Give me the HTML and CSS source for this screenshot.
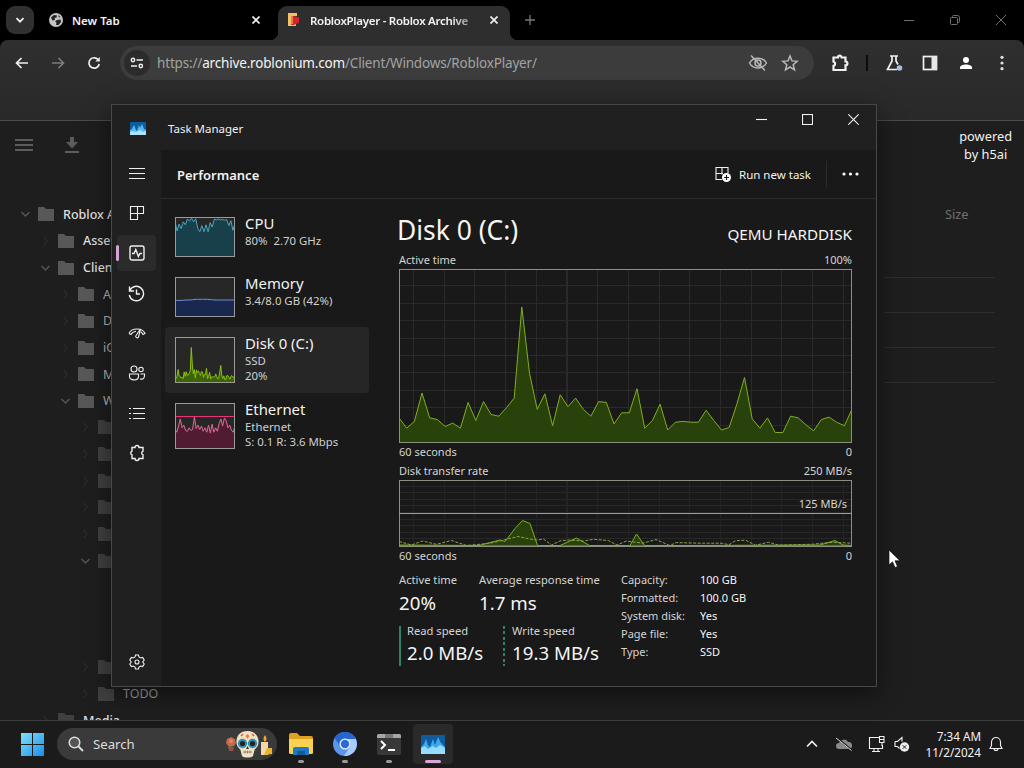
FILE: index.html
```html
<!DOCTYPE html>
<html lang="en">
<head>
    <meta charset="UTF-8">
    <meta name="viewport" content="width=device-width, initial-scale=1.0">
    <title>Task Manager</title>
    <link rel="stylesheet" href="styles.css">
</head>
<body>
    <div class="browser">
        <div class="tab-strip">
            <div class="tab-search">
                <svg width="10" height="10" viewBox="0 0 10 10"><path d="M1.5 3.2 5 6.7l3.500-3.500" class="line thick"/></svg>
            </div>
            <div class="tab">
                <svg class="favicon" width="14" height="14" viewBox="0 0 14 14">
                    <circle cx="7" cy="7" r="7" fill="#c4c4c4"/>
                    <path d="M2 4.500 5 2l3 .500-.500 2-2 .500.500 2-2.500.500zM8 7l3.500-.500L12 9l-2.500 3H7l.500-2.500L6 8.500zM9 2l2.500 2-1.500.500z" fill="#222"/>
                </svg>
                <span class="tab-title">New Tab</span>
                <svg class="tab-close" width="8" height="8" viewBox="0 0 8 8"><path d="M.500.500l7 7M7.500.500l-7 7" class="line thick"/></svg>
            </div>
            <div class="tab active">
                <svg class="favicon" width="14" height="14" viewBox="0 0 14 14">
                    <path d="M1 0h9v3H5v7h4v3H1z" fill="#f3c069"/>
                    <path d="M4 3h3l5 1.500v5L7 12H4z" fill="#d3252b"/>
                    <path d="M4 3h2v8H4z" fill="#f07a3c"/>
                </svg>
                <span class="tab-title fade">RobloxPlayer - Roblox Archive</span>
                <svg class="tab-close" width="8" height="8" viewBox="0 0 8 8"><path d="M.500.500l7 7M7.500.500l-7 7" class="line thick"/></svg>
            </div>
            <svg class="new-tab" width="10" height="10" viewBox="0 0 10 10"><path d="M5 0v10M0 5h10" stroke="#777" stroke-width="1.300"/></svg>
            <div class="caption-buttons">
                <span><svg width="10" height="10" viewBox="0 0 10 10"><path d="M0 5.500h10" class="dim-line"/></svg></span>
                <span><svg width="10" height="10" viewBox="0 0 10 10"><rect x=".500" y="2.500" width="7" height="7" rx="1" class="dim-line"/><path d="M2.500 2.500V1.500a1 1 0 0 1 1-1h4a2 2 0 0 1 2 2v4a1 1 0 0 1-1 1h-1" class="dim-line"/></svg></span>
                <span><svg width="10" height="10" viewBox="0 0 10 10"><path d="M0 0l10 10M10 0L0 10" class="dim-line"/></svg></span>
            </div>
        </div>

        <div class="toolbar">
            <div class="toolbar-row">
                <div class="nav">
                    <span><svg width="14" height="12" viewBox="0 0 14 12"><path d="M13 6H2M6.500 1l-5 5 5 5" class="line thick"/></svg></span>
                    <span class="disabled"><svg width="14" height="12" viewBox="0 0 14 12"><path d="M1 6h11M7.500 1l5 5-5 5" class="line thick"/></svg></span>
                    <span><svg width="14" height="14" viewBox="0 0 14 14"><path d="M11.500 4.200A5.200 5.200 0 1 0 12.200 8" class="line thick"/><path d="M12.800 1v4.500H8.300z" fill="#e8e8e8"/></svg></span>
                </div>
                <div class="omnibox">
                    <div class="site-info">
                        <svg width="14" height="12" viewBox="0 0 14 12"><circle cx="3" cy="3" r="1.700" class="line bold"/><path d="M6.500 3H13M1 9h6" class="line thick"/><circle cx="10.800" cy="9" r="1.700" class="line bold"/></svg>
                    </div>
                    <div class="url">https://<b>archive.roblonium.com</b>/Client/Windows/RobloxPlayer/</div>
                    <svg width="20" height="18" viewBox="0 0 20 18" class="soft"><path d="M1.500 9C5 2.500 15 2.500 18.500 9 15 15.500 5 15.500 1.500 9z"/><circle cx="10" cy="9" r="3"/><path d="M3 1.500l14 15"/></svg>
                    <svg width="18" height="18" viewBox="0 0 18 18" class="soft star"><path d="M9 2l2 4.900 5.200.4-4 3.400 1.300 5.100L9 13l-4.500 2.800 1.300-5.100-4-3.400 5.200-.4z"/></svg>
                </div>
                <div class="extensions">
                    <span class="puzzle"><svg width="18" height="18" viewBox="0 0 18 18"><path d="M2.500 3.500H7a1.800 1.800 0 0 1 3.600 0h3.900v4a1.900 1.900 0 0 1 0 3.800V16h-12v-4.200a2.100 2.100 0 0 0 0-4.100z" class="line heavy"/></svg></span>
                    <i class="separator"></i>
                    <span><svg width="18" height="18" viewBox="0 0 18 18"><path d="M5 2h8M7 2v5L2.500 15.500H12M11 2v5l2 3.500" class="line thick"/><circle cx="14.500" cy="14" r="2.800" fill="#a8c0e0"/></svg></span>
                    <span><svg width="16" height="16" viewBox="0 0 16 16"><rect x="1.500" y="1.500" width="13" height="13" class="line thick"/><path d="M9.500 1H15v14H9.500z" fill="#e8e8e8"/></svg></span>
                    <span class="avatar"><svg width="14" height="14" viewBox="0 0 14 14"><circle cx="7" cy="4" r="3" fill="#fff"/><path d="M1 13v-1.500C1 9.500 4 8.500 7 8.500s6 1 6 3V13z" fill="#fff"/></svg></span>
                    <span><svg width="4" height="16" viewBox="0 0 4 16" fill="#e0e0e0"><circle cx="2" cy="2.300" r="1.600"/><circle cx="2" cy="8" r="1.600"/><circle cx="2" cy="13.700" r="1.600"/></svg></span>
                </div>
            </div>
        </div>

        <div class="page">
            <div class="page-bar">
                <svg width="20" height="14" viewBox="0 0 20 14"><path d="M1 2h18M1 7h18M1 12h18" stroke="#5c5c5c" stroke-width="2"/></svg>
                <svg width="16" height="18" viewBox="0 0 16 18" fill="#5c5c5c"><path d="M6 1h4v5h4l-6 6.500L2 6h4zM1 15h14v2H1z"/></svg>
                <div class="powered">powered<br>by h5ai</div>
            </div>
            <div class="page-main">
                <ul class="tree" id="tree"></ul>
                <div class="listing">
                    <div class="listing-head">Size</div>
                    <div class="row"></div>
                    <div class="row"></div>
                    <div class="row"></div>
                </div>
            </div>
        </div>
    </div>

    <div class="window">
        <div class="title-bar">
            <svg width="16" height="13" viewBox="0 0 16 13"><rect width="16" height="13" fill="#0c5c9e"/><path d="M0 13V8l2-1 2-4 2 5 1 1 2-6 1 3 2-4 2 5 2 1v5z" fill="#55b9f5"/><path d="M0 13v-3l3-1 3 1 4-2 3 2 3-1v4z" fill="#aee0ff"/></svg>
            <span class="title">Task Manager</span>
            <div class="window-buttons">
                <span><svg width="11" height="11" viewBox="0 0 11 11"><path d="M0 5.500h11" class="line"/></svg></span>
                <span><svg width="11" height="11" viewBox="0 0 11 11"><rect x=".500" y=".500" width="10" height="10" class="line"/></svg></span>
                <span><svg width="11" height="11" viewBox="0 0 11 11"><path d="M.300.300l10.400 10.400M10.700.300L.300 10.700" class="line"/></svg></span>
            </div>
        </div>
        <div class="window-body">
            <div class="sidebar">
                <span><svg width="16" height="12" viewBox="0 0 16 12"><path d="M0 1.500h16M0 6.500h16M0 11.500h16" class="line"/></svg></span>
                <span><svg width="16" height="16" viewBox="0 0 16 16"><path d="M1.500 1.500h13v7h-13zM8.500 1.500v13h-7v-6M1.500 8.500h7" class="line"/></svg></span>
                <span class="selected"><svg width="16" height="16" viewBox="0 0 16 16"><rect x="1" y="1" width="14" height="14" rx="2" class="line bold"/><path d="M3 8.500h2l1.800-4 2.600 7 1.600-3h2" class="line bold"/></svg></span>
                <span><svg width="17" height="17" viewBox="0 0 17 17"><path d="M1.500 1.500v4.500H6M1.700 5.800A7.200 7.200 0 1 1 1.300 10M8.500 4.500v4.500H12" class="line bold"/></svg></span>
                <span><svg width="18" height="16" viewBox="0 0 18 16"><path d="M1 8.500C3.500 2.500 14.500 2.500 17 8.500l-2 1c-.6-1.300-1.300-2.200-2.300-2.700M1 8.500l2 1c.8-1.700 2.400-3 5-3.300" class="line"/><path d="M12.500 4L8 10.500a1.500 1.500 0 0 0 2.500 1.700z" class="line"/></svg></span>
                <span><svg width="18" height="16" viewBox="0 0 18 16"><circle cx="6" cy="4" r="3" class="line"/><circle cx="13" cy="4.500" r="2.200" class="line"/><path d="M1.500 9h9v2.500c0 4.500-9 4.500-9 0zM12.500 9H16.500v2c0 2.600-2.300 3.500-4.500 3" class="line"/></svg></span>
                <span><svg width="16" height="13" viewBox="0 0 16 13"><path d="M4 1.500h12M4 6.500h12M4 11.500h12M0 1.500h2M0 6.500h2M0 11.500h2" class="line"/></svg></span>
                <span><svg width="16" height="18" viewBox="0 0 16 18"><path d="M3 3.500h3a2 2 0 0 1 4 0h4v3.700a1.900 1.900 0 0 0 0 3.600v3.700h-4a2 2 0 0 1-4 0H3v-3.700a1.900 1.900 0 0 1 0-3.600z" class="line bold"/></svg></span>
                <span class="settings"><svg width="16" height="16" viewBox="0 0 16 16"><path d="M6.500 1h3l.5 2 1.700 1 2-.6 1.500 2.600L13.700 8l1.500 2-1.500 2.600-2-.6-1.700 1-.5 2h-3L6 13l-1.700-1-2 .6L.8 10l1.500-2L.8 6l1.500-2.600 2 .6L6 3z" class="line"/><circle cx="8" cy="8" r="2" class="line"/></svg></span>
            </div>

            <div class="content">
                <div class="content-head">
                    <h1>Performance</h1>
                    <svg width="16" height="16" viewBox="0 0 16 16"><path d="M7 13.500H1V1.500h12V7M7 1.500v7M1 7.500h7" class="line"/><circle cx="11.500" cy="11.500" r="4.500" fill="#fff"/><path d="M11.500 9v5M9 11.500h5" stroke="#191919" stroke-width="1.200"/></svg>
                    <span class="run-task">Run new task</span>
                    <i class="separator"></i>
                    <svg class="more" width="17" height="4" viewBox="0 0 17 4" fill="#fff"><circle cx="2" cy="2" r="1.600"/><circle cx="8.500" cy="2" r="1.600"/><circle cx="15" cy="2" r="1.600"/></svg>
                </div>

                <div class="panels">
                    <div class="resources">
                        <div class="resource">
                            <svg class="mini cpu" width="60" height="40" data-chart="cpu"></svg>
                            <div>
                                <h2>CPU</h2>
                                <p>80%&nbsp; 2.70 GHz</p>
                            </div>
                        </div>
                        <div class="resource">
                            <svg class="mini memory" width="60" height="40" data-chart="memory"></svg>
                            <div>
                                <h2>Memory</h2>
                                <p>3.4/8.0 GB (42%)</p>
                            </div>
                        </div>
                        <div class="resource tall current">
                            <svg class="mini disk" width="60" height="46" data-chart="disk"></svg>
                            <div>
                                <h2>Disk 0 (C:)</h2>
                                <p>SSD</p>
                                <p>20%</p>
                            </div>
                        </div>
                        <div class="resource tall">
                            <svg class="mini ethernet" width="60" height="46" data-chart="ethernet"></svg>
                            <div>
                                <h2>Ethernet</h2>
                                <p>Ethernet</p>
                                <p>S: 0.1 R: 3.6 Mbps</p>
                            </div>
                        </div>
                    </div>

                    <div class="detail">
                        <div class="detail-head">
                            <span class="name">Disk 0 (C:)</span>
                            <span class="model">QEMU HARDDISK</span>
                        </div>
                        <div class="caption"><span>Active time</span><span>100%</span></div>
                        <svg class="chart active-chart disk" width="453" height="174" data-chart="disk"></svg>
                        <div class="caption below"><span>60 seconds</span><span>0</span></div>
                        <div class="caption"><span>Disk transfer rate</span><span>250 MB/s</span></div>
                        <div class="transfer">
                            <svg class="chart transfer-chart disk" width="453" height="67" viewBox="0 0 453 67">
                                <path class="area" d="M0 66V65L80 65.500 91 62.500 101 60l5 1.500 10-13 7.500-8 7.500 3L138.500 65.500H161L177.500 58l13 7.500h40.500L237.500 54l8 11.500H290L421 65l15-4.500 8 4.500 10 .500V66z"/>
                                <path class="dashed" d="M0 61.500 12.500 65 23.500 61l14 3.300L52.500 60.500 67.500 65.500 91 63.300 119 56.500l9 2 10 1.500 6.500-1L152.500 65l8.500-4 8.500-1 15 1 10-1.700 15 1.300 8.500 4.500 9-4 17 2 13-3.500 14 6 6-3 24 .6h22l7 1.500 6.500-4 10-.500 10 5 13-3 10 3 34-1 20-2 18 1"/>
                                <rect class="frame" x=".5" y=".5" width="452" height="66"/>
                                <path class="limit" d="M0 33.500h453"/>
                            </svg>
                            <span class="limit-label">125 MB/s</span>
                        </div>
                        <div class="caption below"><span>60 seconds</span><span>0</span></div>

                        <div class="stats">
                            <div class="figures">
                                <div class="figure-row">
                                    <div class="figure active-time"><span>Active time</span><strong>20%</strong></div>
                                    <div class="figure"><span>Average response time</span><strong>1.7 ms</strong></div>
                                </div>
                                <div class="figure-row speeds">
                                    <div class="figure read"><span>Read speed</span><strong>2.0 MB/s</strong></div>
                                    <div class="figure write"><span>Write speed</span><strong>19.3 MB/s</strong></div>
                                </div>
                            </div>
                            <dl class="properties">
                                <dt>Capacity:</dt><dd>100 GB</dd>
                                <dt>Formatted:</dt><dd>100.0 GB</dd>
                                <dt>System disk:</dt><dd>Yes</dd>
                                <dt>Page file:</dt><dd>Yes</dd>
                                <dt>Type:</dt><dd>SSD</dd>
                            </dl>
                        </div>
                    </div>
                </div>
            </div>
        </div>
    </div>

    <div class="taskbar">
        <svg class="start" width="23" height="23" viewBox="0 0 23 23">
            <defs><linearGradient id="win" x1="0" y1="0" x2="1" y2="1"><stop offset="0" stop-color="#7fe0fb"/><stop offset="1" stop-color="#1c8de8"/></linearGradient></defs>
            <path d="M0 0h11v11H0zM12 0h11v11H12zM0 12h11v11H0zM12 12h11v11H12z" fill="url(#win)"/>
        </svg>
        <div class="search">
            <svg width="16" height="16" viewBox="0 0 16 16"><circle cx="6.500" cy="6.500" r="5.300" fill="#555" stroke="#ddd" stroke-width="1.500"/><path d="M10.500 10.500l4.500 4.500" stroke="#ddd" stroke-width="1.800"/></svg>
            <span>Search</span>
            <svg class="doodle" width="48" height="28" viewBox="0 0 48 28">
                <path d="M2 9l4-2 4 2 1 4-2 3-5 1-3-4z" fill="#c4694e"/><path d="M3 17h6l-1 4H4z" fill="#8a5640"/><circle cx="6" cy="11" r="2" fill="#dd8a66"/>
                <path d="M22.500 1C15 1 11 6 11.500 13c.3 4 3 5 4 7l1.500 6c2 2 9 2 11 0l1.500-6c1-2 3.700-3 4-7C34 6 30 1 22.500 1z" fill="#f0e2c4"/>
                <circle cx="17.500" cy="13.500" r="4.700" fill="#2e91ba"/><circle cx="27.500" cy="13.500" r="4.700" fill="#2e91ba"/>
                <circle cx="17.500" cy="13.500" r="2.600" fill="#26221f"/><circle cx="27.500" cy="13.500" r="2.600" fill="#26221f"/>
                <path d="M22.500 4l2 2-2 3-2-3z" fill="#e9803c"/><path d="M16 6l2-2M29 6l-2-2" stroke="#d95f3e" stroke-width="1.500"/>
                <path d="M22.500 16l1.500 3h-3z" fill="#333"/><path d="M18 22h9M20 20.500v3M22.500 20.500v3M25 20.500v3" stroke="#777" stroke-width=".8"/>
                <path d="M36 12h7v13h-7z" fill="#f1d7ad"/><path d="M40 5c2 3 2 5 0 7-2-2-2-4 0-7z" fill="#f7a928"/><path d="M42 18h5v6l-8 1z" fill="#e7b32b"/>
            </svg>
        </div>
        <div class="apps">
            <span class="app">
                <svg width="26" height="24" viewBox="0 0 26 24"><path d="M1 3q0-2 2-2h6l3 3h11q2 0 2 2v15H1z" fill="#e0a020"/><path d="M1 7h24v14q0 1-2 1H3q-2 0-2-1z" fill="#fbd152"/><path d="M5 23v-6q0-2 2-2h12q2 0 2 2v6z" fill="#1f78c2"/><path d="M9 23v-4h8v4z" fill="#155a96"/></svg>
            </span>
            <span class="app">
                <svg width="24" height="24" viewBox="0 0 24 24"><circle cx="12" cy="12" r="12" fill="#5b96ee"/><path d="M1.600 6A12 12 0 0 1 22.800 7H12a5.500 5.500 0 0 0-5 7z" fill="#2766cf"/><path d="M11 24A12 12 0 0 0 22.800 7H12a5.500 5.500 0 0 1 4.500 8.500z" fill="#a9cbfa"/><circle cx="12" cy="12" r="5.500" fill="#eef4ff"/><circle cx="12" cy="12" r="4.200" fill="#2a6bd8"/></svg>
            </span>
            <span class="app">
                <svg width="24" height="21" viewBox="0 0 24 21"><rect width="24" height="21" rx="1.500" fill="#383838"/><path d="M0 4V1.500Q0 0 1.500 0h21Q24 0 24 1.500V4z" fill="#a6a6a6"/><path d="M8 0h8v4H8z" fill="#777"/><path d="M4 7l4 4-4 4M11 16h7" fill="none" stroke="#fff" stroke-width="2"/></svg>
            </span>
            <span class="app open">
                <svg width="24" height="19" viewBox="0 0 24 19"><rect width="24" height="19" rx="1" fill="#0f5b9c"/><path d="M0 19v-7l3-3 2-5 2 6 2 2 3-8 2 6 3-8 3 6 4 4v7z" fill="#3aa9ea"/><path d="M0 19v-6l4-2 3 3 5-3 3 2 4-3 5 3v6z" fill="#96dcff"/></svg>
            </span>
        </div>
        <div class="tray">
            <svg class="up" width="12" height="8" viewBox="0 0 12 8"><path d="M1 6.500l5-5 5 5" class="line thick"/></svg>
            <svg class="cloud" width="18" height="14" viewBox="0 0 18 14"><path d="M4 12a3 3 0 0 1 0-6 5 5 0 0 1 9-1 3.500 3.500 0 0 1 1 7z" fill="#8a8a8a"/><path d="M2 1l14.500 12" stroke="#1c1c1c" stroke-width="2"/><path d="M1 1l15.500 12.500" stroke="#ddd"/></svg>
            <svg class="network" width="17" height="17" viewBox="0 0 17 17"><path d="M11 1.500H1.500v11h13V9M4 15.500h8M6 12.500v3M10 12.500v3" class="line"/><path d="M11.500 3.500h4.500v-3h-4.500zM11.500 3.500v3h4.500v-3M14 6.500V10" class="line"/></svg>
            <svg class="volume" width="16" height="16" viewBox="0 0 16 16"><path d="M1 5.500h2.500L8 1.500v4M1 5.500v5h2.500l2 2" class="line"/><circle cx="10.500" cy="11" r="4.700" fill="#eee"/><path d="M8.700 9.200l3.600 3.600M12.300 9.200l-3.600 3.600" stroke="#222"/></svg>
            <div class="clock">7:34 AM<br>11/2/2024</div>
            <svg class="bell" width="14" height="16" viewBox="0 0 14 16"><path d="M1 12.500l1.500-3V6a4.500 4.500 0 0 1 9 0v3.500l1.500 3zM5 12.500a2 2 0 0 0 4 0" class="line"/></svg>
        </div>
    </div>

    <svg class="cursor" width="13" height="20" viewBox="0 0 13 20"><path d="M1 1v15l3.500-3.200L7 18.500l2.500-1-2.500-5.700h5z" fill="#fff" stroke="#111" stroke-width=".7"/></svg>

    <script>
        // level, name, state of the arrow (open, closed, none)
        const folders = [
            [0, 'Roblox Archive', 'open'],
            [1, 'Assets', 'closed'],
            [1, 'Client', 'open'],
            [2, 'Android', 'closed'],
            [2, 'Docs', 'closed'],
            [2, 'iOS', 'closed'],
            [2, 'Mac', 'closed'],
            [2, 'Windows', 'open'],
            [3, '', 'closed'],
            [3, '', 'closed'],
            [3, '', 'closed'],
            [3, '', 'closed'],
            [3, '', 'closed'],
            [3, '', 'open'],
            [4, '', 'none'],
            [4, '', 'none'],
            [4, '', 'none'],
            [3, '', 'closed'],
            [3, 'TODO', 'closed'],
            [1, 'Media', 'closed']
        ];
        const arrows = {
            open: '<path d="M1.5 3l4 4 4-4" stroke="#555"/>',
            closed: '<path d="M4 1l3 4-3 4" stroke="#2a2a2a"/>',
            none: ''
        };
        document.getElementById('tree').innerHTML = folders.map(([level, name, state], i) =>
            `<li class="level-${level}${i > 7 ? ' faded' : ''}">` +
            `<svg width="10" height="10" viewBox="0 0 10 10" fill="none" stroke-width="1.5">${arrows[state]}</svg>` +
            `<svg class="folder" width="16" height="14" viewBox="0 0 16 14"><path d="M0 0h6l2 2h8v12H0z"/></svg>` +
            `<span>${name}</span></li>`
        ).join('');

        // Samples from oldest to newest, percent of the chart's height
        const series = {
            disk: [14, 8, 12, 28.5, 14, 13, 9, 11, 8, 23, 12.5, 23.5, 16, 15, 20, 25.5, 78.5, 40, 19, 28, 9.5, 27.5,
                20.5, 25.5, 19, 15, 23.5, 23, 10.5, 17, 17, 31, 8, 12.5, 22, 7, 11.5, 12, 11.5, 11.5, 18.5, 12.5, 7,
                8.5, 22, 37.5, 13.5, 8, 14, 5.5, 5.5, 15, 14, 10, 6.5, 13, 14.5, 11.5, 9.5, 19],
            cpu: [90, 66, 84, 72, 90, 82, 97, 92, 99, 90, 98, 72, 64, 80, 64, 82, 64, 88, 76, 97, 95, 97, 95, 96, 94, 96, 80, 93, 68, 85],
            memory: [41, 41, 41, 41, 42, 42, 42, 43, 44, 44, 44, 44, 44, 44, 43, 43, 42, 42, 42, 42, 42, 42, 42, 42, 42],
            ethernet: [42, 36, 50, 66, 46, 52, 40, 38, 46, 40, 42, 70, 44, 52, 42, 50, 38, 46, 36, 52, 34, 54, 36, 46, 38,
                56, 66, 50, 68, 62, 46, 52, 40, 36, 50]
        };
        document.querySelectorAll('[data-chart]').forEach(svg => {
            const values = series[svg.dataset.chart];
            const w = +svg.getAttribute('width');
            const h = +svg.getAttribute('height');
            const points = values.map((v, i) => (i * w / (values.length - 1)).toFixed(1) + ',' + (h - 1 - v / 100 * (h - 2)).toFixed(1)).join(' ');
            svg.innerHTML = `<polygon class="area" points="-2,${h} ${points} ${w + 2},${h}"/>` +
                (svg.dataset.chart === 'ethernet' ? '<path class="limit" d="M0 13.5h60"/>' : '') +
                `<rect class="frame" x=".5" y=".5" width="${w - 1}" height="${h - 1}"/>`;
        });
    </script>
</body>
</html>
```
FILE: styles.css
```css
* {
    box-sizing: border-box;
}
body {
    margin: 0;
    width: 1024px;
    height: 768px;
    overflow: hidden;
    display: flex;
    flex-direction: column;
    position: relative;
    background: #000;
    color: #f2f2f2;
    font-family: "Noto Sans", "Open Sans", sans-serif;
    font-size: 11.5px;
}
svg {
    display: block;
    flex: none;
}
h1, h2, p, ul, dl, dd {
    margin: 0;
    padding: 0;
    font-weight: normal;
}
.line {
    fill: none;
    stroke: #f0f0f0;
    stroke-width: 1.1;
}
.bold {
    stroke-width: 1.4;
}
.thick {
    stroke-width: 1.7;
}
.heavy {
    stroke-width: 2.2;
}
.dim-line {
    fill: none;
    stroke: #707070;
}

/* Browser */
.browser {
    height: 720px;
    overflow: hidden;
    display: flex;
    flex-direction: column;
}
.tab-strip {
    height: 40px;
    flex: none;
    display: flex;
    align-items: center;
    padding-left: 6px;
}
.tab-search {
    width: 28px;
    height: 28px;
    border-radius: 9px;
    background: #303030;
    display: flex;
    align-items: center;
    justify-content: center;
}
.tab {
    width: 244px;
    display: flex;
    align-items: center;
    padding: 0 18px 0 15px;
    font-size: 11.5px;
    font-weight: 600;
}
.tab-title {
    flex: 1;
    margin-left: 9px;
    white-space: nowrap;
}
.fade {
    margin-right: 13px;
    letter-spacing: -0.28px;
    -webkit-mask-image: linear-gradient(to right, #000 85%, rgba(0, 0, 0, 0.3));
    mask-image: linear-gradient(to right, #000 85%, rgba(0, 0, 0, 0.3));
}
.tab.active {
    position: relative;
    width: 232px;
    height: 34px;
    align-self: flex-end;
    padding: 0 12px 6px 9px;
    background: #2e2e2e;
    border-radius: 9px 9px 0 0;
}
.tab.active::before,
.tab.active::after {
    content: "";
    position: absolute;
    bottom: 0;
    width: 8px;
    height: 8px;
}
.tab.active::before {
    left: -8px;
    background: radial-gradient(circle at 0 0, #000 8px, #2e2e2e 8.5px);
}
.tab.active::after {
    right: -8px;
    background: radial-gradient(circle at 100% 0, #000 8px, #2e2e2e 8.5px);
}
.new-tab {
    margin-left: 15px;
}
.caption-buttons {
    margin-left: auto;
    display: flex;
}
.caption-buttons span {
    width: 46px;
    display: flex;
    justify-content: center;
}
.toolbar {
    height: 81px;
    flex: none;
    background: linear-gradient(#2f2f2f, #292929);
    border-radius: 8px 8px 0 0;
    border-bottom: 1px solid #4b4b4b;
}
.toolbar-row {
    display: flex;
    align-items: center;
    height: 46px;
    padding-left: 4px;
}
.nav {
    display: flex;
    width: 116px;
}
.nav span {
    width: 36px;
    display: flex;
    align-items: center;
    justify-content: center;
}
.nav .disabled {
    opacity: 0.4;
}
.omnibox {
    width: 694px;
    height: 34px;
    border-radius: 17px;
    background: #3c3c3c;
    display: flex;
    align-items: center;
    padding: 0 15px 0 4px;
}
.site-info {
    width: 26px;
    height: 26px;
    border-radius: 50%;
    background: #2b2b2b;
    display: flex;
    align-items: center;
    justify-content: center;
}
.url {
    flex: 1;
    margin-left: 7px;
    font-size: 13.5px;
    letter-spacing: -0.17px;
    color: #a2a2a2;
}
.url b {
    font-weight: normal;
    color: #f4f4f4;
}
.soft {
    fill: none;
    stroke: #b8b8b8;
    stroke-width: 1.5;
}
.star {
    margin-left: 13px;
}
.extensions {
    flex: 1;
    display: flex;
    align-items: center;
}
.extensions span {
    width: 36px;
    display: flex;
    justify-content: center;
}
.extensions .puzzle {
    width: 52px;
}
.extensions .separator {
    width: 2px;
    height: 16px;
    background: #0c0c0c;
    margin-right: 8px;
}
.page {
    flex: 1;
    overflow: hidden;
    background: #1e1e1e;
}
.page-bar {
    height: 80px;
    display: flex;
    align-items: flex-start;
    gap: 30px;
    padding: 14px 12px 0 14px;
}
.page-bar svg {
    margin-top: 1px;
}
.page-bar svg:first-child {
    margin-top: 3px;
}
.powered {
    margin: -8px 0 0 auto;
    font-size: 12.8px;
    line-height: 18px;
    text-align: center;
}
.page-main {
    display: flex;
    justify-content: space-between;
}
.tree {
    width: 300px;
    list-style: none;
    font-size: 12.5px;
}
.tree li {
    height: 26.65px;
    display: flex;
    align-items: center;
    color: #dedede;
}
.tree .folder {
    margin: 0 9px 0 8px;
    fill: #585858;
}
.tree .level-0 {
    padding-left: 20px;
    font-weight: 500;
}
.tree .level-1 {
    padding-left: 40px;
    font-weight: 500;
}
.tree .level-2 {
    padding-left: 60px;
    color: #b4b4b4;
}
.tree .level-3 {
    padding-left: 80px;
    color: #999;
}
.tree .level-4 {
    padding-left: 100px;
}
.tree .faded .folder {
    fill: #404040;
}
.listing {
    width: 140px;
    padding-right: 29px;
}
.listing-head {
    height: 77px;
    padding: 4px 0 0 61px;
    border-bottom: 1px solid #2e2e2e;
    font-size: 12.8px;
    color: #707070;
}
.listing .row {
    height: 35px;
    border-bottom: 1px solid #2e2e2e;
}

/* Task Manager window */
.window {
    position: absolute;
    left: 111px;
    top: 104px;
    width: 766px;
    height: 583px;
    border: 1px solid #484848;
    background: #202020;
    box-shadow: 0 6px 22px rgba(0, 0, 0, 0.5);
    display: flex;
    flex-direction: column;
}
.title-bar {
    height: 45px;
    flex: none;
    display: flex;
    align-items: flex-start;
    padding-left: 18px;
}
.title-bar > svg {
    margin-top: 17px;
}
.title {
    margin: 15px 0 0 22px;
    line-height: 17px;
}
.window-buttons {
    margin-left: auto;
    display: flex;
}
.window-buttons span {
    width: 46px;
    height: 29px;
    display: flex;
    align-items: center;
    justify-content: center;
}
.window-body {
    flex: 1;
    display: flex;
}
.sidebar {
    width: 49px;
    flex: none;
    padding: 3px 5px 4px;
    display: flex;
    flex-direction: column;
}
.sidebar span {
    height: 36px;
    margin: 2px 0;
    display: flex;
    align-items: center;
    justify-content: center;
    border-radius: 4px;
}
.sidebar .selected {
    position: relative;
    background: #2b2b2b;
}
.sidebar .selected::before {
    content: "";
    position: absolute;
    left: -1px;
    top: 10px;
    width: 3px;
    height: 16px;
    border-radius: 2px;
    background: #d3a5d6;
}
.sidebar .settings {
    margin-top: auto;
}
.content {
    flex: 1;
    background: #191919;
    display: flex;
    flex-direction: column;
}
.content-head {
    height: 49px;
    flex: none;
    display: flex;
    align-items: center;
    padding: 0 17px 0 16px;
    border-bottom: 1px solid #2c2c2c;
}
.content-head h1 {
    flex: 1;
    padding-top: 1px;
    font-size: 13px;
    font-weight: 600;
}
.run-task {
    margin-left: 8px;
}
.content-head .separator {
    width: 1px;
    height: 26px;
    margin: 0 15px;
    background: #2c2c2c;
}
.panels {
    flex: 1;
    display: flex;
    padding: 8px 24px 0 4px;
}
.resources {
    width: 204px;
    margin-right: 30px;
}
.resource {
    height: 60px;
    display: flex;
    padding: 10px 0 0 10px;
    border-radius: 4px;
}
.resource.tall {
    height: 66px;
}
.resource.current {
    background: #262626;
}
.resource > div {
    margin: -4px 0 0 10px;
}
.resource h2 {
    font-size: 14.9px;
    line-height: 20px;
}
.resource p {
    font-size: 11.4px;
    line-height: 15px;
    color: #d0d0d0;
}
.mini {
    background: #272727;
}
.area {
    stroke-width: 1;
}
.frame {
    fill: none;
    stroke: #999;
}
.cpu .area {
    fill: #17404b;
    stroke: #4ba6bd;
}
.memory .area {
    fill: #1a2850;
    stroke: #6b93d6;
}
.disk .area {
    fill: #29420b;
    stroke: #82ad22;
}
.mini.disk .area {
    fill: #3c6407;
    stroke: #8cc10e;
}
.ethernet .area {
    fill: #511c31;
    stroke: #e06a94;
}
.ethernet .limit {
    stroke: #e8337a;
}
.detail {
    width: 453px;
    color: #d4d4d4;
    font-size: 11px;
}
.detail-head {
    height: 45px;
    display: flex;
    justify-content: space-between;
    align-items: baseline;
    color: #f5f5f5;
}
.name {
    margin-left: -2px;
    font-size: 26.4px;
    line-height: 47px;
}
.model {
    font-size: 15.2px;
}
.caption {
    height: 17px;
    padding-bottom: 2px;
    display: flex;
    justify-content: space-between;
    align-items: center;
}
.caption.below {
    height: 20px;
    padding-bottom: 4px;
}
.chart {
    background-color: #191919;
}
.chart .frame {
    stroke: #8a8f80;
}
.active-chart {
    background-image:
        repeating-linear-gradient(to right, transparent 0 14px, #2a2a2a 14px 15px, transparent 15px 30.7px),
        repeating-linear-gradient(transparent 0 16.4px, #2a2a2a 16.4px 17.4px);
}
.transfer {
    position: relative;
}
.transfer-chart {
    background-image:
        repeating-linear-gradient(to right, transparent 0 14px, #242424 14px 15px, transparent 15px 30.7px),
        repeating-linear-gradient(transparent 0 5.6px, #282828 5.6px 6.6px);
}
.dashed {
    fill: none;
    stroke: #86a840;
    stroke-dasharray: 3 1.5;
}
.transfer-chart .limit {
    stroke: #92be18;
}
.limit-label {
    position: absolute;
    right: 5px;
    top: 16px;
}
.stats {
    display: flex;
    padding-top: 5px;
}
.figures {
    width: 222px;
    margin-top: -1px;
    font-size: 11.2px;
}
.figure-row {
    display: flex;
    height: 51px;
}
.figure {
    display: flex;
    flex-direction: column;
    white-space: nowrap;
    line-height: 17px;
}
.figure strong {
    font-size: 18.7px;
    font-weight: normal;
    line-height: 30px;
    color: #f5f5f5;
}
.active-time {
    width: 80px;
}
.read,
.write {
    height: 40px;
    padding-left: 6px;
    border-left: 2px solid #2b8468;
    line-height: 9px;
}
.speeds .figure strong {
    line-height: 36px;
}
.read {
    width: 104px;
}
.write {
    padding-left: 7px;
    border-image: repeating-linear-gradient(#2b8468 0 3px, transparent 3px 5.5px) 0 0 0 2 / 0 0 0 2px;
}
.speeds {
    padding-top: 4px;
}
.properties {
    display: grid;
    grid-template-columns: 79px auto;
    grid-auto-rows: 18px;
    align-content: start;
}
.properties dd {
    color: #f5f5f5;
}

/* Taskbar */
.taskbar {
    height: 48px;
    display: flex;
    align-items: center;
    padding: 0 0 1px 21px;
    background: #1b1b1b;
    border-top: 1px solid #3d3d3d;
}
.search {
    width: 220px;
    height: 32px;
    margin-left: 13px;
    padding: 0 4px 0 11px;
    display: flex;
    align-items: center;
    border-radius: 16px;
    background: #3a3a3a;
    font-size: 13.2px;
    color: #ddd;
}
.search span {
    flex: 1;
    margin-left: 9px;
}
.apps {
    display: flex;
    margin-left: 4px;
}
.app {
    position: relative;
    width: 40px;
    height: 40px;
    margin-right: 4px;
    border-radius: 4px;
    display: flex;
    align-items: center;
    justify-content: center;
}
.app::after {
    content: "";
    position: absolute;
    bottom: 1px;
    width: 6px;
    height: 3px;
    border-radius: 2px;
    background: #9a9a9a;
}
.app.open {
    background: #2a2a2a;
}
.app.open::after {
    width: 16px;
    background: #d9a6d8;
}
.tray {
    margin-left: auto;
    padding-right: 21px;
    display: flex;
    align-items: center;
}
.cloud {
    margin-left: 17px;
}
.network {
    margin-left: 15px;
}
.volume {
    margin-left: 9px;
}
.clock {
    width: 71px;
    font-size: 11.7px;
    line-height: 16px;
    text-align: right;
}
.bell {
    margin-left: 8px;
}
.cursor {
    position: absolute;
    left: 888px;
    top: 549px;
}
```
